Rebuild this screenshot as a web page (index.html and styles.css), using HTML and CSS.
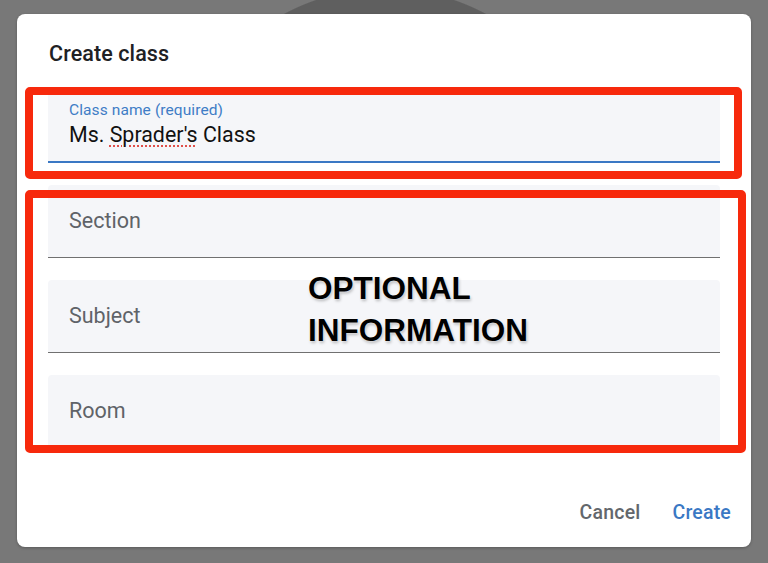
FILE: index.html
```html
<!DOCTYPE html>
<html>
<head>
<meta charset="utf-8">
<link rel="stylesheet" href="styles.css">
</head>
<body>
<div class="dialog">
  <h1 class="title">Create class</h1>
  <div class="fields">
    <div class="field field-active">
      <div class="label">Class name (required)</div>
      <div class="value">Ms. <span class="misspelled">Sprader's</span> Class</div>
    </div>
    <div class="field"><div class="placeholder">Section</div></div>
    <div class="field"><div class="placeholder">Subject</div></div>
    <div class="field"><div class="placeholder">Room</div></div>
  </div>
  <div class="actions">
    <span class="btn btn-cancel">Cancel</span>
    <span class="btn btn-create">Create</span>
  </div>
  <div class="mark mark-required"></div>
  <div class="mark mark-optional"></div>
  <div class="note">OPTIONAL<br>INFORMATION</div>
</div>
</body>
</html>
```
FILE: styles.css
```css
html, body {
  margin: 0;
  padding: 0;
}
body {
  width: 768px;
  height: 563px;
  overflow: hidden;
  background:
    radial-gradient(circle 214px at 385px 202px, #5f5f5f 99.5%, rgba(95,95,95,0) 100%),
    #787878;
  font-family: Roboto, "Liberation Sans", Arial, sans-serif;
  padding-top: 14px;
  padding-left: 17px;
  box-sizing: border-box;
}
.dialog {
  position: relative;
  width: 734px;
  height: 533px;
  background: #fff;
  border-radius: 8px;
  box-shadow: 0 1px 3px rgba(0,0,0,0.25);
  box-sizing: border-box;
  padding: 28px 31px 22px 31px;
  display: flex;
  flex-direction: column;
}
.title {
  margin: 0 0 24px 1px;
  font-size: 21.5px;
  line-height: 24px;
  font-weight: 500;
  color: #202124;
  letter-spacing: 0.1px;
}
.fields {
  display: flex;
  flex-direction: column;
  gap: 22px;
}
.field {
  height: 73px;
  box-sizing: border-box;
  background: #f5f6f9;
  border-radius: 4px 4px 0 0;
  border-bottom: 1px solid #707070;
  padding: 0 21px;
  display: flex;
  flex-direction: column;
  justify-content: center;
}
.field-active {
  border-bottom: 2px solid #3a78c4;
  justify-content: flex-start;
  padding-top: 12px;
}
.label {
  font-size: 15.5px;
  line-height: 17px;
  color: #3f7dc6;
  letter-spacing: 0.1px;
}
.value {
  margin-top: 4px;
  font-size: 21.4px;
  line-height: 24px;
  color: #111;
}
.misspelled {
  text-decoration: underline dotted #e0504a;
  text-decoration-thickness: 2px;
  text-underline-offset: 3px;
}
.placeholder {
  font-size: 21.5px;
  line-height: 24px;
  color: #5f6368;
}
.actions {
  margin-top: auto;
  display: flex;
  justify-content: flex-end;
  gap: 32px;
  margin-right: -11px;
}
.btn {
  font-size: 19.5px;
  line-height: 24px;
  font-weight: 500;
  letter-spacing: 0.2px;
}
.btn-cancel { color: #63676c; }
.btn-create { color: #3a78c4; }

.mark {
  position: absolute;
  border: 8px solid #f7290c;
  border-radius: 5px;
  box-sizing: border-box;
}
.mark-required {
  left: 8px;
  top: 73px;
  width: 717px;
  height: 92px;
}
.mark-optional {
  left: 8px;
  top: 176px;
  width: 721px;
  height: 263px;
}
.note {
  position: absolute;
  left: 291px;
  top: 253px;
  font-family: "Liberation Sans", Arial, sans-serif;
  font-weight: 700;
  font-size: 31.5px;
  line-height: 42px;
  color: #000;
  text-shadow: 0 0 2px #fff, 1px 2px 3px rgba(0,0,0,0.25);
}
```
